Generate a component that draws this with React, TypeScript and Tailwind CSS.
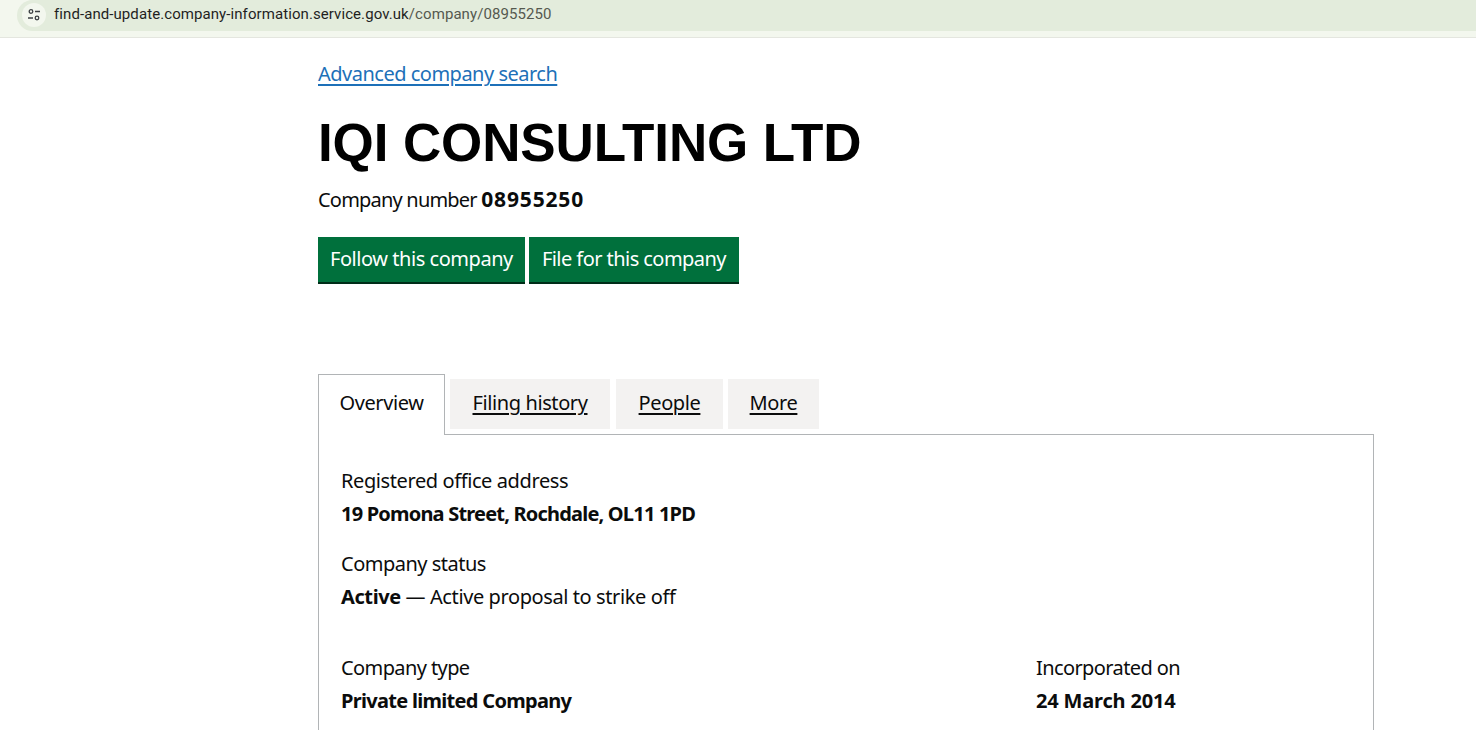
const Field = ({ label, labelClass, children }: { label: string; labelClass?: string; children: React.ReactNode }) => (
  <div>
    <div className={`h-[33px] leading-[33px] ${labelClass ?? ""}`}>{label}</div>
    <div className="h-[33px] leading-[33px]">{children}</div>
  </div>
);

const tabClass = "h-[50px] pb-[2px] bg-[#f3f2f1] flex items-center justify-center text-[#0b0c0c] underline underline-offset-[3px] decoration-[2px]";
const buttonClass = "h-[47px] pb-[1px] flex items-center bg-[#00703c] border-b-[2px] border-[#002d18] text-white";

export default function App() {
  return (
    <div className="h-[730px] overflow-hidden bg-white font-['Noto_Sans',sans-serif] text-[20px] text-[#0b0c0c] tracking-[-0.4px]">
      {/* browser address bar */}
      <div className="h-[38px] bg-[#f3f7ee] border-b border-[#e4e6df] tracking-normal">
        <div className="h-[31px] ml-[17px] pl-[5px] pb-[2px] rounded-l-[16px] bg-[#e3ecdc] flex items-center">
          <div className="w-[24px] h-[24px] rounded-full bg-[#f3f7ee] flex items-center justify-center">
            <svg width="14" height="14" viewBox="0 0 14 14" fill="none" stroke="#3c4043" strokeWidth="1.3">
              <circle cx="4" cy="3.5" r="1.8" />
              <path d="M8 3.5h5M1 10h5" />
              <circle cx="10" cy="10" r="1.8" />
            </svg>
          </div>
          <div className="ml-[8px] font-['Roboto',sans-serif] text-[15px] tracking-[0.08px] text-[#1f1f1f]">
            find-and-update.company-information.service.gov.uk<span className="text-[#55594f]">/company/08955250</span>
          </div>
        </div>
      </div>

      <main className="ml-[318px] w-[1056px]">
        <a className="block mt-[22px] h-[28px] leading-[28px] text-[#1d70b8] underline underline-offset-[3px] decoration-[2px] tracking-[-0.5px]">
          Advanced company search
        </a>
        <h1 className="mt-[27px] h-[56px] leading-[56px] font-['Liberation_Sans',sans-serif] font-bold text-[53px] text-black tracking-[-0.12px]">
          IQI CONSULTING LTD
        </h1>
        <p className="mt-[15px] h-[28px] leading-[28px] tracking-[-0.8px]">
          Company number <strong className="font-bold text-[21px] leading-[0] tracking-[0.85px]">08955250</strong>
        </p>
        <div className="mt-[23px] flex gap-[4px]">
          <a className={`${buttonClass} px-[12px] tracking-[-0.45px]`}>Follow this company</a>
          <a className={`${buttonClass} px-[13px] tracking-[-0.55px]`}>File for this company</a>
        </div>

        <div className="mt-[90px] flex items-end h-[61px] border-b border-[#b1b4b6]">
          <div className="relative w-[127px] h-[61px] -mb-px bg-white border border-b-0 border-[#b1b4b6] flex items-center justify-center pb-[5px]">
            Overview
          </div>
          <div className="flex ml-[5px] mb-[5px]">
            <a className={`${tabClass} w-[160px]`}>Filing history</a>
            <a className={`${tabClass} w-[107px] ml-[6px]`}>People</a>
            <a className={`${tabClass} w-[91px] ml-[5px]`}>More</a>
          </div>
        </div>

        <section className="h-[400px] border-x border-[#b1b4b6] px-[22px] pt-[29px]">
          <Field label="Registered office address">
            <strong className="font-bold tracking-[-0.8px]">19 Pomona Street, Rochdale, OL11 1PD</strong>
          </Field>
          <div className="mt-[17px]">
            <Field label="Company status" labelClass="tracking-[-0.5px]">
              <strong className="font-bold">Active</strong> — Active proposal to strike off
            </Field>
          </div>
          <div className="mt-[38px] flex">
            <div className="w-[695px]">
              <Field label="Company type" labelClass="tracking-[-0.6px]">
                <strong className="font-bold tracking-[-0.7px]">Private limited Company</strong>
              </Field>
            </div>
            <Field label="Incorporated on" labelClass="tracking-[-0.6px]">
              <strong className="font-bold tracking-[-0.17px]">24 March 2014</strong>
            </Field>
          </div>
        </section>
      </main>
    </div>
  );
}
